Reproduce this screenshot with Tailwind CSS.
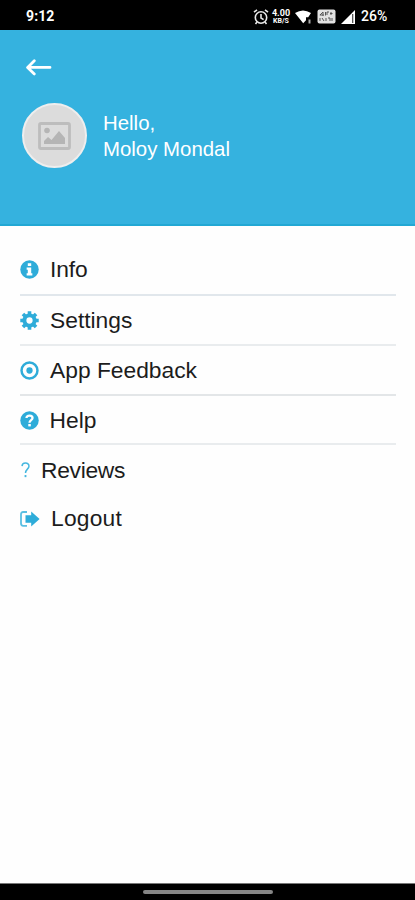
<!DOCTYPE html>
<html lang="en">
<head>
<meta charset="utf-8">
<title>Profile</title>
<script src="https://cdn.jsdelivr.net/npm/@tailwindcss/browser@4"></script>
</head>
<body class="bg-[#fefefe] overflow-hidden">
<div class="w-[415px] h-[900px] flex flex-col font-['Liberation_Sans',Arial,sans-serif]">
  <div class="h-[30px] shrink-0 bg-black text-white flex items-center pl-[26px] pt-[3px] font-['Roboto',sans-serif] text-[14px] font-bold">
    <span class="w-[227px] tracking-[0.1px]">9:12</span>
    <svg class="w-[16px] h-[18px] shrink-0" viewBox="0 0 16 18" fill="none" stroke="#e8e8e8" stroke-width="1.6"><circle cx="8" cy="9.5" r="5.7"/><path d="M1 4.2 4 1.8M15 4.2 12 1.8M8 6v4l2.6 1.6M4 14l-1.5 2M12 14l1.5 2"/></svg>
    <span class="w-[20px] ml-[2px] shrink-0 flex flex-col items-center text-[9px] leading-[10px] -mt-px"><span class="h-[8px] leading-[8px]">4.00</span><span class="h-[7px] text-[7px] leading-[8px]">KB/S</span></span>
    <svg class="w-[17px] h-[14px] ml-[4px] shrink-0" viewBox="0 0 17 14" fill="#fff"><path d="M0 3Q8 -2 16 3L13.2 7.2H11v3L8.2 13.3Z"/><path d="M13.5 9.5h2v4h-2z" fill="#aaa"/></svg>
    <svg class="w-[19px] h-[15px] ml-[5px] shrink-0" viewBox="0 0 19 15"><rect x=".5" y=".5" width="18" height="14" rx="2" fill="#e2e2e2"/><path d="M3 6l3-3v4M2.8 6h4M8.5 3v3.5M10 6V3h2M14 3v3M15.5 4.5H13M3 9v3M5 9l2 3M9 9v3M11 9h2v3M15 9v3" stroke="#555" stroke-width="1" fill="none"/></svg>
    <svg class="w-[14px] h-[14px] ml-[5px] shrink-0" viewBox="0 0 14 14"><path d="M0 14 14 0V14Z" fill="#fff"/><path d="M11.7 4v9" stroke="#444" stroke-width="1.2"/></svg>
    <span class="ml-[6px] font-medium">26%</span>
  </div>
  <header class="h-[196px] shrink-0 bg-[#35b2df] border-b-2 border-[#22a8d4] text-white">
    <svg class="w-[26px] h-[18px] ml-[26px] mt-[28px] block" viewBox="0 0 26 18" fill="none" stroke="#fff" stroke-width="2.8" stroke-linecap="round" stroke-linejoin="round"><path d="M24 9.4H2M8.3 2.8 1.6 9.4l6.7 6.5"/></svg>
    <div class="flex items-center ml-[22px] mt-[27px]">
      <div class="size-[65px] rounded-full bg-[#dcdcdc] border-2 border-[#eeeeee] flex items-center justify-center">
        <svg class="w-[33px] h-[28px]" viewBox="0 0 33 28"><rect x="1.5" y="1.5" width="30" height="25" rx="1.5" fill="none" stroke="#bdbdbd" stroke-width="2.8"/><circle cx="9" cy="8.5" r="2.8" fill="#b5b5b5"/><path d="M6 22v-3l4-4 3.5 3L21 9l6 7v6Z" fill="#b5b5b5"/></svg>
      </div>
      <p class="ml-[16px] text-[20.4px] leading-[26px]">Hello,<br>Moloy Mondal</p>
    </div>
  </header>
  <nav class="ml-[20px] mr-[19px] mt-[19px] text-[22.8px] leading-[49px] text-[#1c1c1c]">
    <div class="h-[51px] flex items-center border-b-2 border-[#e1e7ec]">
      <svg class="size-[19px]" viewBox="0 0 20 20"><circle cx="10" cy="10" r="9.7" fill="#2eacd9"/><path d="M8.2 3.4h3.6v2.8H8.2zM7 7.8h4.8v6.2H13v2.3H7V14h1.2v-3.8H7Z" fill="#fff"/></svg>
      <span class="ml-[11px] tracking-[-0.1px]">Info</span>
    </div>
    <div class="h-[50px] flex items-center border-b-2 border-[#e9ecee]">
      <svg class="size-[19px]" viewBox="0 0 20 20" fill="none" stroke="#2eacd9"><circle cx="10" cy="10" r="5.4" stroke-width="4.2"/><path d="M10 .3v4M10 15.7v4M.3 10h4M15.7 10h4M3.1 3.1l3 3M13.9 13.9l3 3M3.1 16.9l3-3M13.9 6.1l3-3" stroke-width="3.8"/></svg>
      <span class="ml-[11px]">Settings</span>
    </div>
    <div class="h-[50px] flex items-center border-b-2 border-[#e3e6e8]">
      <svg class="size-[19px]" viewBox="0 0 20 20"><circle cx="10" cy="10" r="8.4" fill="none" stroke="#2eacd9" stroke-width="2.6"/><circle cx="10" cy="10" r="3.3" fill="#2eacd9"/></svg>
      <span class="ml-[11px]">App Feedback</span>
    </div>
    <div class="h-[49px] pt-px flex items-center border-b-2 border-[#e9ecee]">
      <svg class="size-[19px]" viewBox="0 0 20 20"><circle cx="10" cy="10" r="9.7" fill="#2eacd9"/><path d="M6.8 7.4C7 3.9 13.2 3.9 13.2 7.4 13.2 9.7 10 9.6 10 12.4" fill="none" stroke="#fff" stroke-width="2.4"/><path d="M8.7 13.7h2.7v2.5H8.7z" fill="#fff"/></svg>
      <span class="ml-[10.5px]">Help</span>
    </div>
    <div class="h-[49px] pt-px flex items-center">
      <svg class="w-[11px] h-[18px]" viewBox="0 0 12 18"><path d="M2.2 4.8C2.4.2 10 .4 9.8 4.9 9.7 8 6 8.3 6 12.3" fill="none" stroke="#45b7df" stroke-width="1.6"/><path d="M5 14.5h2v2.3H5z" fill="#45b7df"/></svg>
      <span class="ml-[10px] tracking-[-0.3px]">Reviews</span>
    </div>
    <div class="h-[49px] flex items-center">
      <svg class="w-[20px] h-[18px]" viewBox="1 0 20 18"><path d="M8 2H4.2Q2 2 2 4.2v9.4Q2 15.8 4.2 15.8H8" fill="none" stroke="#5bbfe2" stroke-width="1.8"/><path d="M6.5 5.2h5.7V1.4L20.6 9l-8.4 7.6V12.8H6.5Z" fill="#2eacd9"/></svg>
      <span class="ml-[11px] tracking-[0.2px]">Logout</span>
    </div>
  </nav>
  <footer class="mt-auto h-[17px] shrink-0 bg-black border-t border-[#777] flex justify-center pt-[6px]"><div class="w-[130px] h-[4px] rounded-full bg-[#858585]"></div></footer>
</div>
</body>
</html>
